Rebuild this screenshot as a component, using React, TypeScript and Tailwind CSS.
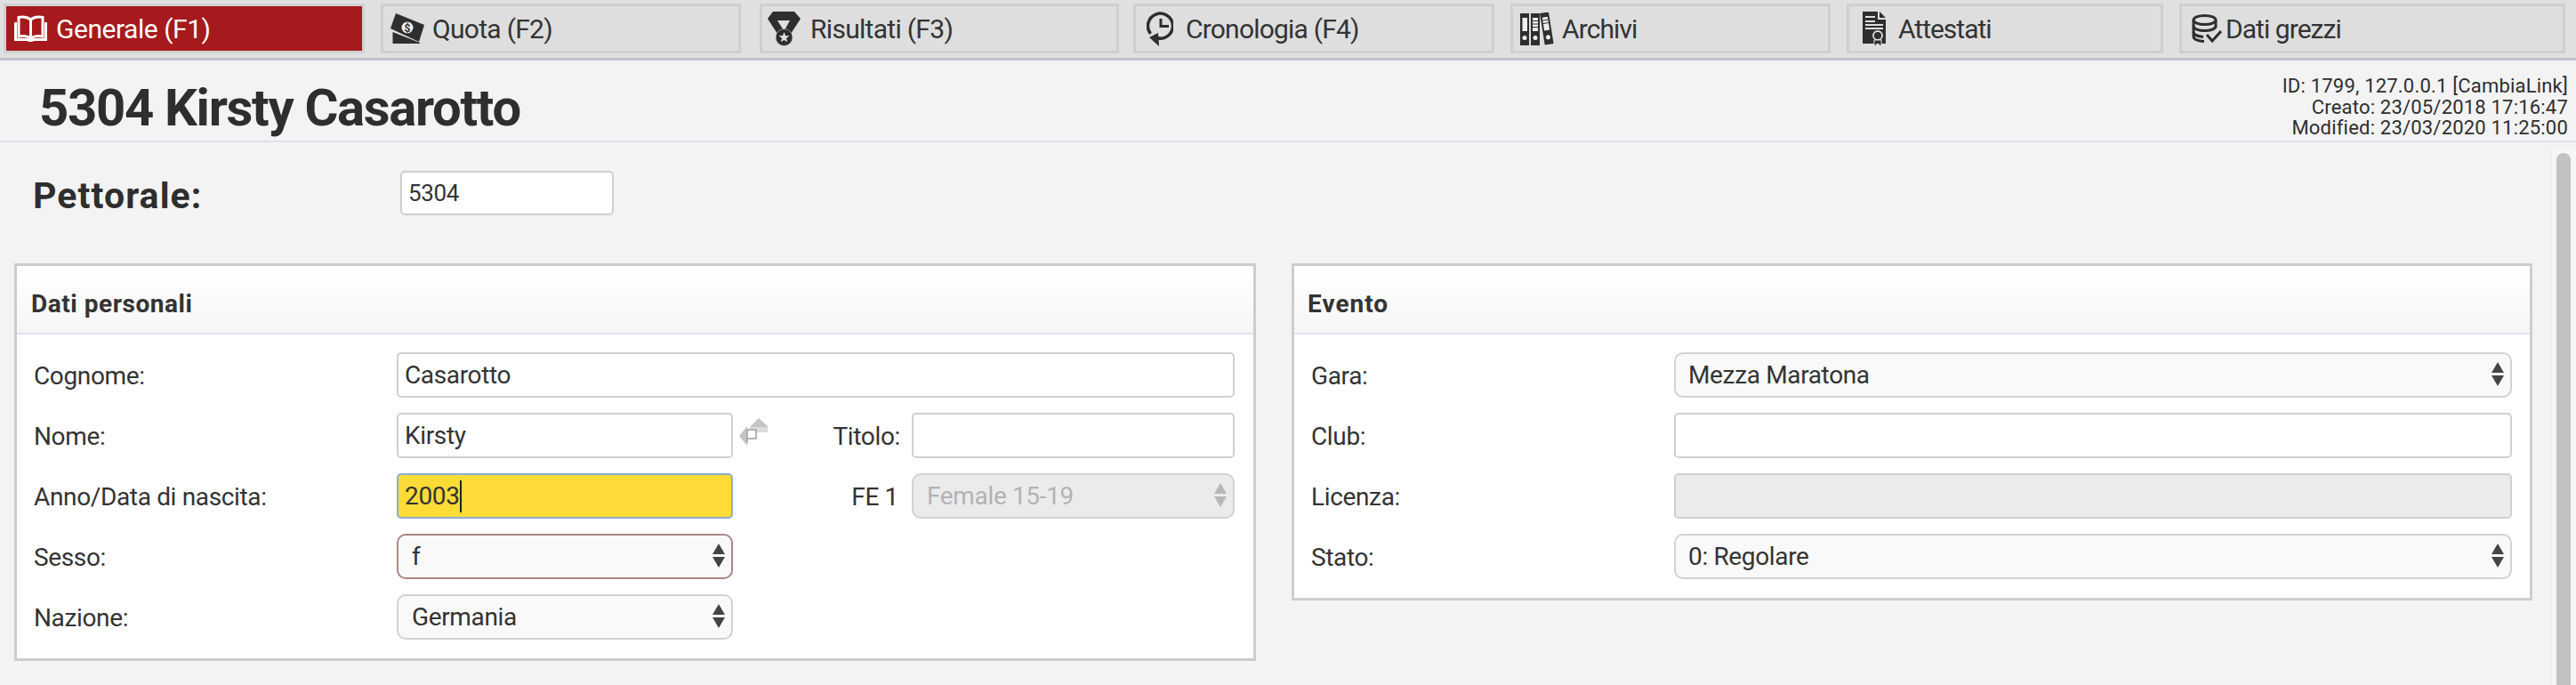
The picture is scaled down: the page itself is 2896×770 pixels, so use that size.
import React from "react";

const BookIcon = () => (
  <svg width="37" height="30" viewBox="0 0 37 30" fill="none" stroke="#fff" strokeWidth="3">
    <path d="M18.5 5C15 2.5 10 1.5 5 2.5V24C10 23 15 23.5 18.5 26C22 23.5 27 23 32 24V2.5C27 1.5 22 2.500 18.5 5V26" />
    <path d="M1.500 8V27.500H15L18.500 29L22 27.500H35.500V8" />
  </svg>
);
const MoneyIcon = () => (
  <svg width="38" height="34" viewBox="0 0 38 34">
    <polygon points="6,0 38,13 32,32 0,17" fill="#2e2e2e" />
    <polygon points="2.500,21 2.500,34 33,34 33,33" fill="#2e2e2e" />
    <circle cx="19" cy="16" r="6.500" fill="#eee" />
    <text x="19" y="20.500" textAnchor="middle" fontSize="12" fontWeight="700" fill="#2e2e2e" className="[font-family:Roboto,sans-serif]">$</text>
  </svg>
);
const MedalIcon = () => (
  <svg width="38" height="39" viewBox="0 0 38 39">
    <path fillRule="evenodd" d="M6 0H30L37 8L26 25H11L0 8ZM11 10L18.500 22L25 10Z" fill="#2e2e2e" />
    <circle cx="18.500" cy="29" r="9.500" fill="#2e2e2e" stroke="#dedede" strokeWidth="0.500" />
    <polygon points="18.500,23 20,27 24.500,27.300 21,30 22.200,34.300 18.500,32 14.800,34.300 16,30 12.500,27.300 17,27" fill="#dedede" />
  </svg>
);
const ClockIcon = () => (
  <svg width="30" height="39" viewBox="0 0 30 39" fill="none">
    <path d="M4.500 24.800A14 14 0 1 1 12 29.700" stroke="#2e2e2e" strokeWidth="3.500" />
    <path d="M16 8V16.500H25" stroke="#2e2e2e" strokeWidth="3" />
    <polygon points="13,24 14,39 3,29" fill="#2e2e2e" />
  </svg>
);
const BindersIcon = () => (
  <svg width="38" height="37" viewBox="0 0 38 37">
    <rect x="0" y="1" width="10" height="36" fill="#2e2e2e" />
    <rect x="2.500" y="6" width="5.500" height="15" fill="#eee" />
    <circle cx="5" cy="28.500" r="2.500" fill="#eee" />
    <rect x="12" y="1" width="10" height="36" fill="#2e2e2e" />
    <rect x="14" y="6" width="6" height="15" fill="#eee" />
    <path d="M14 9.500H20M14 13H20M14 16.500H20" stroke="#2e2e2e" strokeWidth="1" />
    <circle cx="17" cy="28.500" r="2.500" fill="#eee" />
    <g transform="rotate(-9 30 19)">
      <rect x="25" y="0" width="10" height="36" fill="#2e2e2e" />
      <rect x="27" y="5" width="6" height="15" fill="#eee" />
      <path d="M27 8.500H33M27 12H33" stroke="#2e2e2e" strokeWidth="1" />
      <circle cx="30" cy="28" r="2.500" fill="#eee" />
    </g>
  </svg>
);
const CertificateIcon = () => (
  <svg width="26" height="39" viewBox="0 0 26 39">
    <polygon points="0,0 17,0 17,9 26,9 26,36 0,36" fill="#2e2e2e" />
    <polygon points="19,0 26,7 19,7" fill="#2e2e2e" />
    <path d="M3 6H14M3 11H14M3 15H23M3 19H23" stroke="#dedede" strokeWidth="1.800" />
    <circle cx="17" cy="27" r="5" fill="none" stroke="#dedede" strokeWidth="1.800" />
    <polygon points="13,32 21,32 21,39 17,36 13,39" fill="#2e2e2e" stroke="#dedede" strokeWidth="1" />
  </svg>
);
const DatabaseIcon = () => (
  <svg width="34" height="32" viewBox="0 0 34 32" fill="none" stroke="#2e2e2e" strokeWidth="3">
    <ellipse cx="14.500" cy="6.500" rx="12.500" ry="5" />
    <path d="M2 6.500V25C2 28 7 30 14 30.500" />
    <path d="M27 6.500V15" />
    <path d="M2 13C2 16.500 8 18.500 14.500 18.500C20 18.500 25 17 27 14.500" />
    <path d="M2 20C2 23 7 25 13 25.500" />
    <path d="M17 23L23 30L33 19" />
  </svg>
);
const SwapIcon = () => (
  <svg width="33" height="31" viewBox="0 0 33 31">
    <polygon points="12,10 22,0 33,10" fill="#c4c4c4" />
    <rect x="12" y="10" width="20" height="6" fill="#dcdcdc" />
    <polygon points="0,20 9,9 9,31" fill="#c4c4c4" />
    <rect x="9" y="13" width="10" height="10" fill="#fff" stroke="#a0a0a0" strokeWidth="1.500" />
    <path d="M9 28V23" stroke="#a0a0a0" strokeWidth="1.500" />
  </svg>
);
const Arrows = ({ color = "#444" }: { color?: string }) => (
  <svg width="14" height="27" viewBox="0 0 14 27" className="absolute right-[9px] top-[11px]">
    <polygon points="7,0 14,12 0,12" fill={color} />
    <polygon points="0,15 14,15 7,27" fill={color} />
  </svg>
);

const tabs = [
  { label: "Generale (F1)", icon: <BookIcon />, box: "ml-[4px] w-[406px] pl-[9px] gap-[10px] border-[#d0d0d0] bg-[#a6191c] text-white", text: "tracking-[-0.46px]" },
  { label: "Quota (F2)", icon: <MoneyIcon />, box: "ml-[18px] w-[405px] pl-[8px] gap-[9px] border-[#cfcfcf] bg-[#dedede] text-[#333]", text: "tracking-[-0.7px]" },
  { label: "Risultati (F3)", icon: <MedalIcon />, box: "ml-[21px] w-[404px] pl-[6px] gap-[10px] border-[#cfcfcf] bg-[#dedede] text-[#333]", text: "tracking-[-0.7px]" },
  { label: "Cronologia (F4)", icon: <ClockIcon />, box: "ml-[16px] w-[406px] pl-[12px] gap-[14px] border-[#cfcfcf] bg-[#dedede] text-[#333]", text: "tracking-[-0.8px]" },
  { label: "Archivi", icon: <BindersIcon />, box: "ml-[18px] w-[360px] pl-[8px] gap-[9px] border-[#cfcfcf] bg-[#dedede] text-[#333]", text: "tracking-[-0.9px]" },
  { label: "Attestati", icon: <CertificateIcon />, box: "ml-[18px] w-[356px] pl-[15px] gap-[14px] border-[#cfcfcf] bg-[#dedede] text-[#333]", text: "tracking-[-1px]" },
  { label: "Dati grezzi", icon: <DatabaseIcon />, box: "ml-[18px] w-[434px] pl-[11px] gap-[4px] border-[#cfcfcf] bg-[#dedede] text-[#333]", text: "tracking-[-0.95px]" },
];

const inputBase = "block h-[51px] w-full rounded-[5px] border-2 border-[#cfcfcf] bg-white px-[7px] text-[28px] text-[#333] tracking-[-0.35px] outline-none";

const TextField = ({ value = "", className = "" }: { value?: string; className?: string }) => (
  <input readOnly value={value} className={`${inputBase} ${className}`} />
);

const SelectField = ({ value, border = "border-[#d2d2d2]", disabled = false, wide = false }: { value: string; border?: string; disabled?: boolean; wide?: boolean }) => (
  <div className="relative w-full">
    <select
      disabled={disabled}
      defaultValue={value}
      className={`block h-[51px] w-full appearance-none rounded-[10px] border-2 ${border} ${disabled ? "bg-[#ebebeb] text-[#b3b3b3]" : "bg-[#f9f9f9] text-[#333]"} ${wide ? "pl-[14px]" : "pl-[15px]"} text-[28px] tracking-[-0.35px] outline-none opacity-100`}
    >
      <option>{value}</option>
    </select>
    <Arrows color={disabled ? "#b7b7b7" : "#444"} />
  </div>
);

const Label = ({ children, className = "" }: { children: React.ReactNode; className?: string }) => (
  <span className={`pt-[2px] text-[28px] leading-none text-[#333] tracking-[-0.35px] ${className}`}>{children}</span>
);

const Row = ({ children }: { children: React.ReactNode }) => (
  <div className="flex h-[51px] items-center">{children}</div>
);

const Panel = ({ title, className, side, children }: { title: string; className: string; side: "left" | "right"; children: React.ReactNode }) => (
  <section className={`border-[3px] border-[#cdcdcd] bg-white ${className}`}>
    <header className="flex h-[77px] items-center border-b-2 border-[#dfe2f1] bg-gradient-to-b from-white to-[#f6f6f6] pt-[11px]">
      <h2 className={`text-[28px] font-bold text-[#333] ${side === "left" ? "pl-[16px] tracking-[0.55px]" : "pl-[15px] tracking-[1px]"}`}>{title}</h2>
    </header>
    <div className={`flex flex-col gap-[17px] pt-[20px] pb-[21px] ${side === "left" ? "pl-[19px] pr-[21px]" : "pl-[19px] pr-[20px]"}`}>{children}</div>
  </section>
);

export default function App() {
  return (
    <div className="flex h-[770px] w-[2896px] flex-col overflow-hidden bg-[#f3f3f3] [font-family:Roboto,sans-serif]">
      <nav className="flex h-[68px] shrink-0 items-start border-b-[3px] border-[#bfc2d4] bg-[#e0e0e0] pt-[4px]">
        {tabs.map((t) => (
          <div key={t.label} className={`flex h-[56px] shrink-0 items-center border-[3px] text-[30px] ${t.box}`}>
            <span className="flex shrink-0">{t.icon}</span>
            <span className={t.text}>{t.label}</span>
          </div>
        ))}
      </nav>

      <div className="flex h-[92px] shrink-0 items-start justify-between border-b-2 border-[#dde0ee] pl-[44px] pr-[9px]">
        <h1 className="pt-[14px] text-[58px] leading-[78px] font-bold text-[#2e2e2e] tracking-[-1.3px]">5304 Kirsty Casarotto</h1>
        <div className="pt-[17px] text-right text-[22px] leading-[23.7px] text-[#2e2e2e] tracking-[0.2px]">
          <div>ID: 1799, 127.0.0.1 [CambiaLink]</div>
          <div>Creato: 23/05/2018 17:16:47</div>
          <div>Modified: 23/03/2020 11:25:00</div>
        </div>
      </div>

      <div className="flex min-h-0 flex-1">
        <main className="w-[2867px] shrink-0 pl-[16px]">
          <div className="flex h-[136px] items-start pt-[32px]">
            <span className="w-[434px] pl-[21px] pt-[5px] text-[41px] leading-[46px] font-bold text-[#2e2e2e] tracking-[1.1px]">Pettorale:</span>
            <TextField value="5304" className="!h-[50px] !w-[240px] !text-[26px]" />
          </div>
          <div className="flex items-start gap-[40px]">
            <Panel title="Dati personali" className="w-[1396px]" side="left">
              <Row>
                <Label className="w-[408px] shrink-0">Cognome:</Label>
                <TextField value="Casarotto" />
              </Row>
              <Row>
                <Label className="w-[408px] shrink-0">Nome:</Label>
                <div className="w-[378px] shrink-0"><TextField value="Kirsty" /></div>
                <span className="ml-[7px] mb-[8px] flex shrink-0"><SwapIcon /></span>
                <Label className="flex-1 pr-[13px] text-right">Titolo:</Label>
                <div className="w-[363px] shrink-0"><TextField /></div>
              </Row>
              <Row>
                <Label className="w-[408px] shrink-0">Anno/Data di nascita:</Label>
                <div className="w-[378px] shrink-0">
                  <div className={`${inputBase} flex items-center !border-[#8eadcf] !bg-[#ffdb38]`}>
                    <span className="border-r-2 border-[#222] leading-[36px]">2003</span>
                  </div>
                </div>
                <Label className="flex-1 pr-[15px] text-right">FE 1</Label>
                <div className="w-[363px] shrink-0"><SelectField value="Female 15-19" disabled /></div>
              </Row>
              <Row>
                <Label className="w-[408px] shrink-0">Sesso:</Label>
                <div className="w-[378px] shrink-0"><SelectField value="f" border="border-[#a98784]" /></div>
              </Row>
              <Row>
                <Label className="w-[408px] shrink-0">Nazione:</Label>
                <div className="w-[378px] shrink-0"><SelectField value="Germania" /></div>
              </Row>
            </Panel>
            <Panel title="Evento" className="w-[1395px]" side="right">
              <Row>
                <Label className="w-[408px] shrink-0">Gara:</Label>
                <SelectField value="Mezza Maratona" wide />
              </Row>
              <Row>
                <Label className="w-[408px] shrink-0">Club:</Label>
                <TextField />
              </Row>
              <Row>
                <Label className="w-[408px] shrink-0">Licenza:</Label>
                <TextField className="!bg-[#ebebeb]" />
              </Row>
              <Row>
                <Label className="w-[408px] shrink-0">Stato:</Label>
                <SelectField value="0: Regolare" wide />
              </Row>
            </Panel>
          </div>
        </main>
        <aside className="mt-[7px] flex flex-1 justify-center border-l border-[#e4e4e4] bg-[#f6f6f6] pt-[5px]">
          <div className="h-[800px] w-[16px] rounded-t-full bg-[#c1c1c1]" />
        </aside>
      </div>
    </div>
  );
}
